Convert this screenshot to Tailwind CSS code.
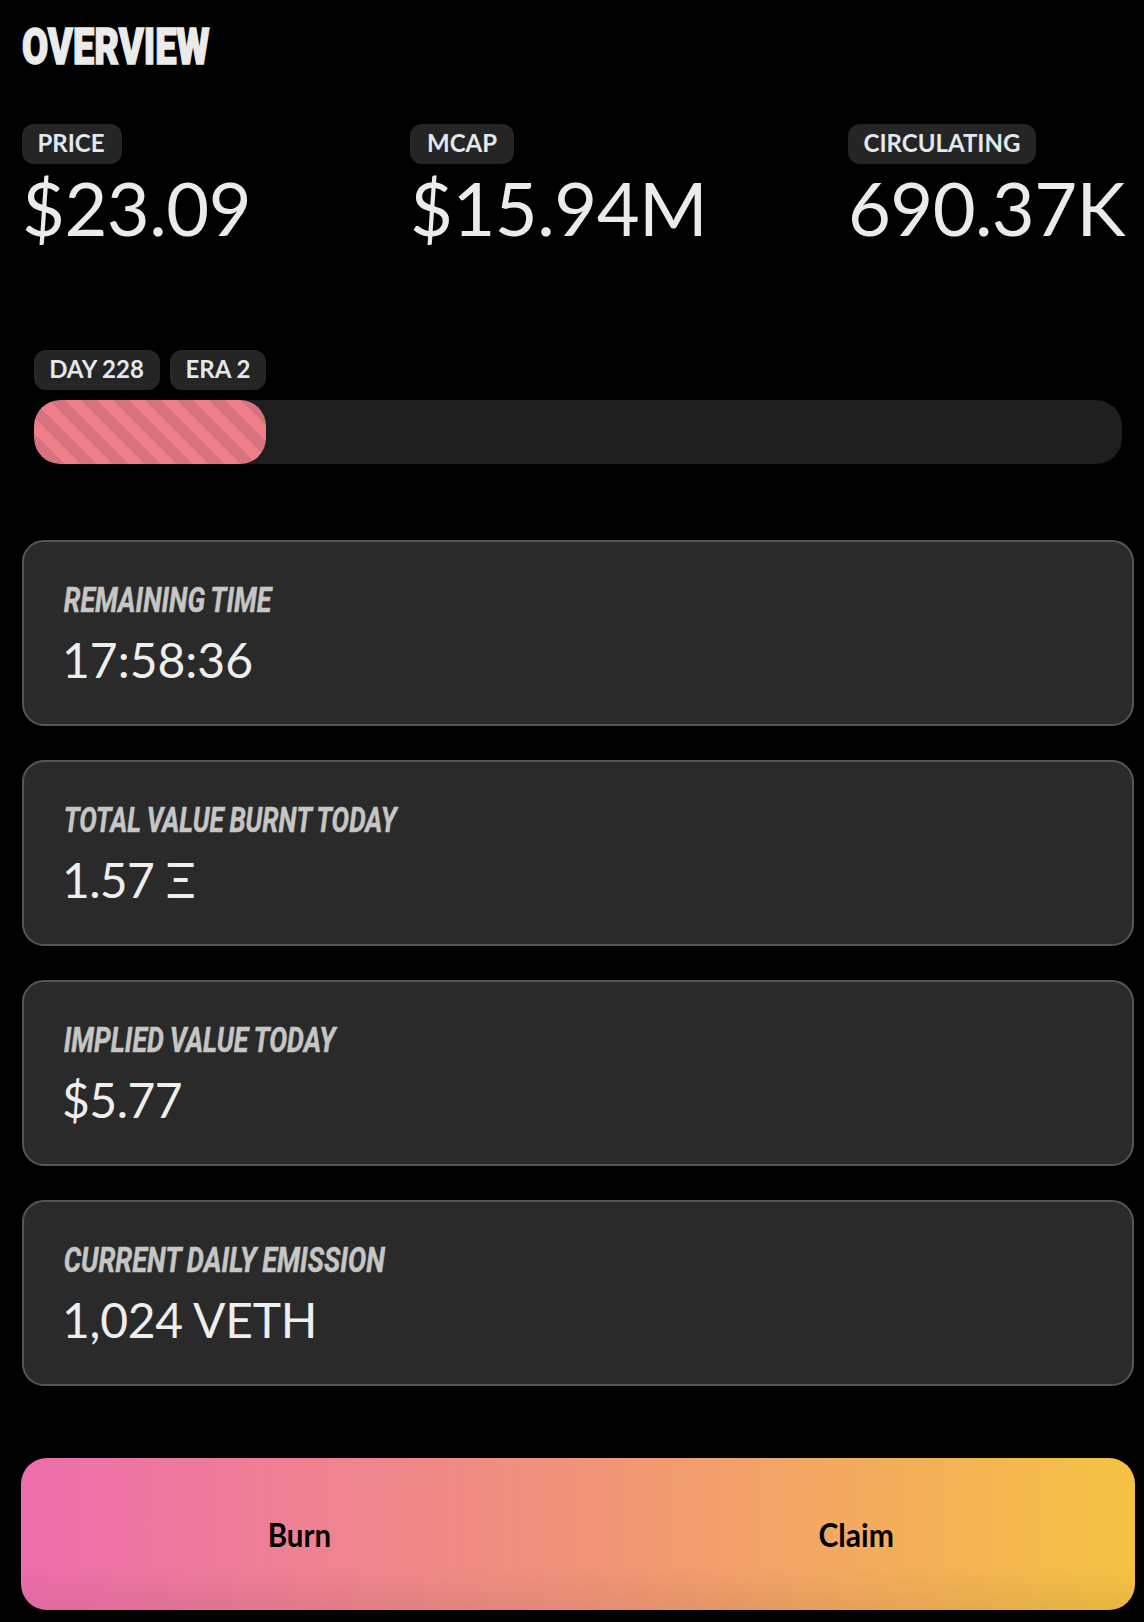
<!DOCTYPE html>
<html lang="en">
<head>
<meta charset="utf-8">
<title>Overview</title>
<script src="https://cdn.jsdelivr.net/npm/@tailwindcss/browser@4"></script>
</head>
<body class="bg-black font-['Lato',sans-serif] text-[#ebebeb]">
<main class="flex h-[1622px] w-[1144px] flex-col overflow-hidden pl-[22px] pr-[10px]">
  <h1 class="mt-[22px] h-[50px] origin-left scale-x-[0.76] whitespace-nowrap font-['Roboto',sans-serif] text-[50px] leading-[50px] font-black [-webkit-text-stroke:1.5px_#ebebeb]">OVERVIEW</h1>
  <section class="mt-[52px] grid grid-cols-[388px_438px_1fr]">
    <div>
      <span class="flex h-10 w-[100px] items-center justify-center rounded-xl bg-[#252525] pr-0.5 pb-0.5 text-2xl font-bold text-[#e2e8f0]">PRICE</span>
      <p class="h-[90px] text-[74px] leading-[87px] tracking-[-0.5px]">$23.09</p>
    </div>
    <div>
      <span class="flex h-10 w-[104px] items-center justify-center rounded-xl bg-[#252525] pb-0.5 text-2xl font-bold text-[#e2e8f0]">MCAP</span>
      <p class="h-[90px] text-[74px] leading-[87px] tracking-[-0.5px]">$15.94M</p>
    </div>
    <div>
      <span class="flex h-10 w-[188px] items-center justify-center rounded-xl bg-[#252525] pb-0.5 text-2xl font-bold text-[#e2e8f0]">CIRCULATING</span>
      <p class="h-[90px] text-[74px] leading-[87px] tracking-[-0.6px]">690.37K</p>
    </div>
  </section>
  <section class="mt-24 px-3">
    <div class="flex gap-[10px]">
      <span class="flex h-10 w-[126px] items-center justify-center rounded-xl bg-[#252525] pr-px pb-0.5 text-2xl font-bold text-[#e2e8f0]">DAY 228</span>
      <span class="flex h-10 w-[96px] items-center justify-center rounded-xl bg-[#252525] pb-0.5 text-2xl font-bold text-[#e2e8f0]">ERA 2</span>
    </div>
    <div class="mt-[10px] h-16 w-[1088px] overflow-hidden rounded-[26px] bg-[#1e1e1e]">
      <div class="h-full w-[232px] rounded-[26px] bg-[#f07f8c] bg-[linear-gradient(45deg,rgba(0,0,0,0.1)_25%,transparent_25%,transparent_50%,rgba(0,0,0,0.1)_50%,rgba(0,0,0,0.1)_75%,transparent_75%)] bg-size-[32px_32px] bg-position-[14px_0px]"></div>
    </div>
  </section>
  <section class="mt-[76px] flex flex-col gap-[34px]">
    <div class="h-[186px] rounded-[22px] border-2 border-[#555] bg-[#2a2a2a] px-[39px] pt-[39px]">
      <h2 class="h-10 origin-left scale-x-[0.766] whitespace-nowrap pl-px font-['Roboto',sans-serif] text-[35px] leading-10 font-bold text-[#c6c6c6] italic [word-spacing:-1px] [-webkit-text-stroke:0.5px_#c6c6c6]">REMAINING TIME</h2>
      <p class="-ml-px mt-[9px] h-[60px] text-5xl leading-[60px] text-[#eee]">17:58:36</p>
    </div>
    <div class="h-[186px] rounded-[22px] border-2 border-[#555] bg-[#2a2a2a] px-[39px] pt-[39px]">
      <h2 class="h-10 origin-left scale-x-[0.748] whitespace-nowrap pl-px font-['Roboto',sans-serif] text-[35px] leading-10 font-bold text-[#c6c6c6] italic [word-spacing:-1px] [-webkit-text-stroke:0.5px_#c6c6c6]">TOTAL VALUE BURNT TODAY</h2>
      <p class="-ml-px mt-[9px] h-[60px] text-5xl leading-[60px] tracking-[-0.7px] text-[#eee]">1.57 Ξ</p>
    </div>
    <div class="h-[186px] rounded-[22px] border-2 border-[#555] bg-[#2a2a2a] px-[39px] pt-[39px]">
      <h2 class="h-10 origin-left scale-x-[0.764] whitespace-nowrap pl-px font-['Roboto',sans-serif] text-[35px] leading-10 font-bold text-[#c6c6c6] italic [word-spacing:-1px] [-webkit-text-stroke:0.5px_#c6c6c6]">IMPLIED VALUE TODAY</h2>
      <p class="-ml-px mt-[9px] h-[60px] text-5xl leading-[60px] tracking-[-0.5px] text-[#eee]">$5.77</p>
    </div>
    <div class="h-[186px] rounded-[22px] border-2 border-[#555] bg-[#2a2a2a] px-[39px] pt-[39px]">
      <h2 class="h-10 origin-left scale-x-[0.777] whitespace-nowrap pl-px font-['Roboto',sans-serif] text-[35px] leading-10 font-bold text-[#c6c6c6] italic [word-spacing:-1px] [-webkit-text-stroke:0.5px_#c6c6c6]">CURRENT DAILY EMISSION</h2>
      <p class="-ml-px mt-[9px] h-[60px] text-5xl leading-[60px] tracking-[-0.3px] text-[#eee]">1,024 VETH</p>
    </div>
  </section>
  <section class="-mr-px -ml-px mt-[72px] grid h-[152px] grid-cols-2 rounded-[26px] bg-[linear-gradient(to_top,rgba(0,0,0,0.06),transparent_28%),linear-gradient(to_right,#ed6eac,#f19379_50%,#f5c242)] text-black">
    <button class="flex items-center justify-center pt-px text-[32px] font-bold"><span class="scale-x-[0.92]">Burn</span></button>
    <button class="flex items-center justify-center pt-px text-[32px] font-bold"><span class="scale-x-[0.94]">Claim</span></button>
  </section>
</main>
</body>
</html>
